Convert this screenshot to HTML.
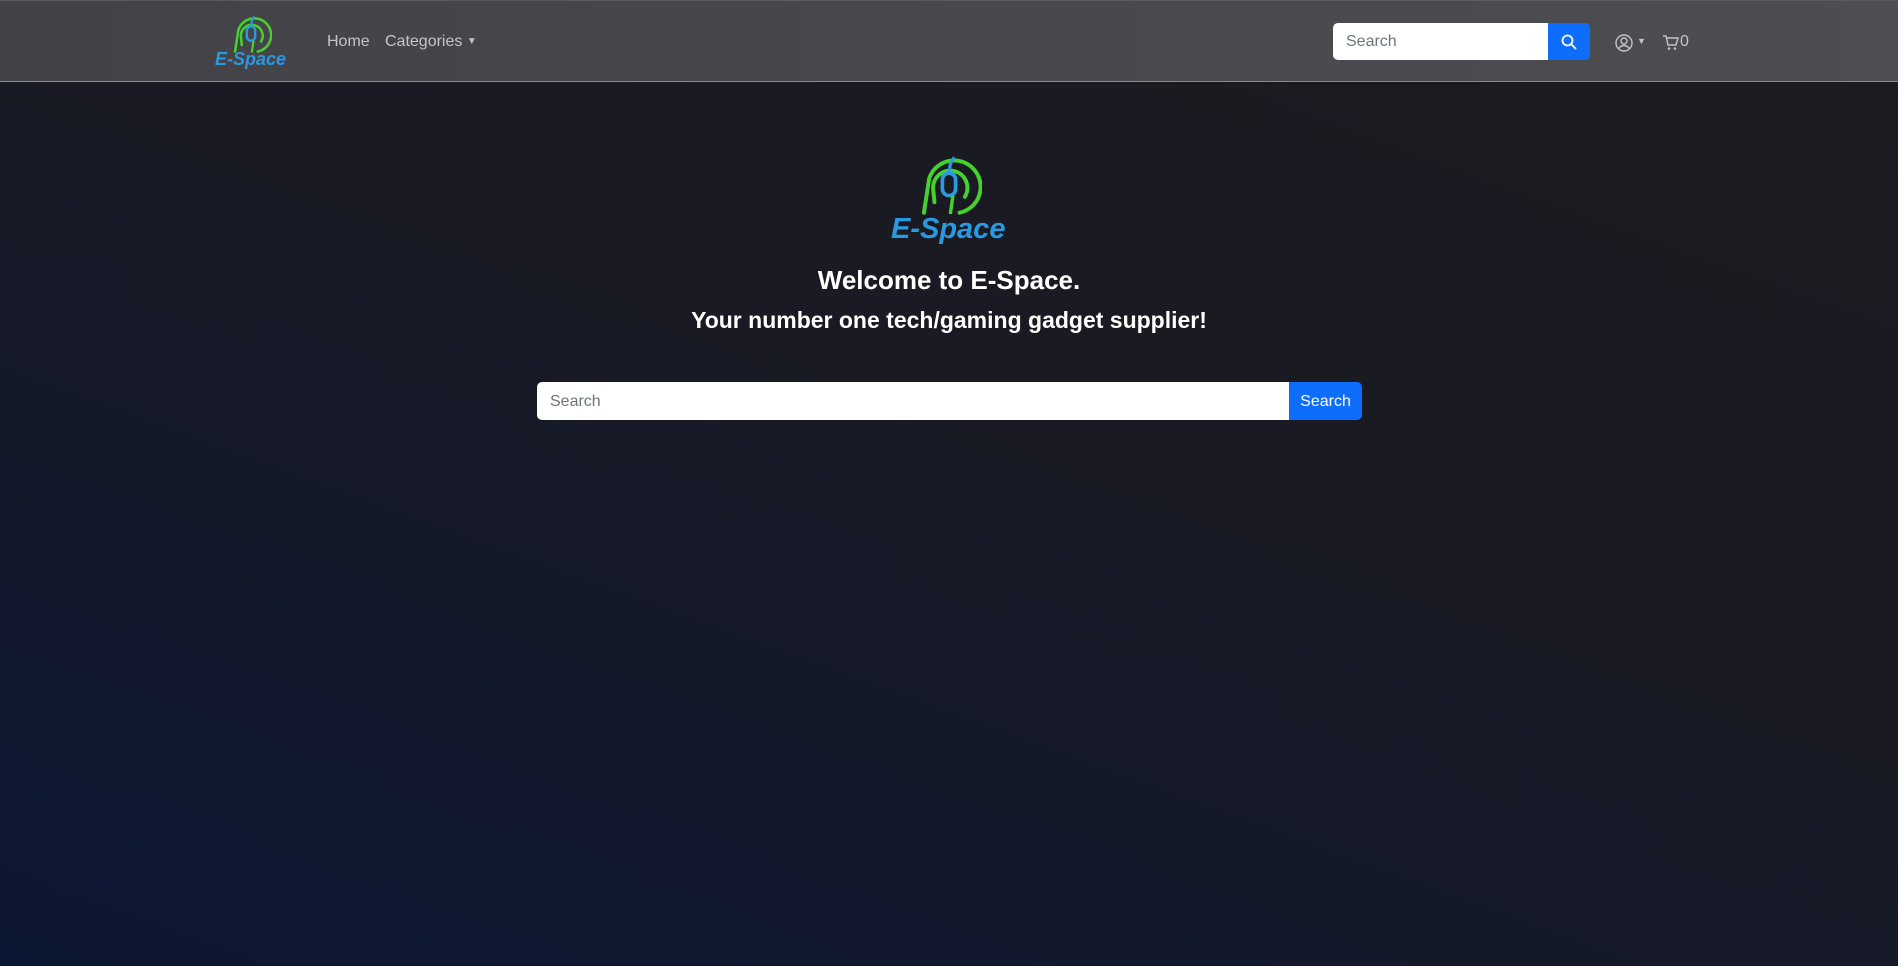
<!DOCTYPE html>
<html><head><style>
*{box-sizing:border-box;margin:0;padding:0}
body{width:1898px;height:966px;overflow:hidden;font-family:"Liberation Sans",sans-serif;background:linear-gradient(200deg,#1c1c20 0%,#191a24 45%,#0c1733 100%);position:relative}
.nav{position:absolute;top:0;left:0;width:1898px;height:82px;background:linear-gradient(90deg,#424248,#4d4d52);border-top:1px solid #5a5a5f;border-bottom:1px solid #8a8a8e}
.a{position:absolute;color:#c4c4c8;font-size:16px}
.logo-t{position:absolute;font-style:italic;font-weight:bold;color:#2a9ae0;font-family:"Liberation Sans",sans-serif}
.sin{position:absolute;left:1333px;top:22px;width:215px;height:37px;background:#fff;border-radius:5px 0 0 5px;color:#6c757d;font-size:16px;padding:10px 13px}
.sbt{position:absolute;left:1548px;top:22px;width:42px;height:37px;background:#0d6efd;border-radius:0 5px 5px 0}
h1{position:absolute;left:0;width:1898px;text-align:center;color:#fff;font-weight:bold}
.bin{position:absolute;left:537px;top:382px;width:752px;height:38px;background:#fff;border-radius:5px 0 0 5px;color:#6c757d;font-size:16px;padding:11px 13px}
.bbt{position:absolute;left:1289px;top:382px;width:73px;height:38px;background:#0d6efd;border-radius:0 5px 5px 0;color:#fff;font-size:16px;text-align:center;line-height:40px}
</style></head><body>
<svg width="0" height="0" style="position:absolute"><defs><g id="lg"><g fill="none" stroke="#44d22c" stroke-width="3" stroke-linecap="round"><path d="M6 46 L10 20 A20 20 0 1 1 33 46"/><path d="M14 38 L13 28 A13 13 0 1 1 37 34"/></g><rect x="20" y="16" width="10" height="17" rx="5" fill="none" stroke="#2a9ae0" stroke-width="2.8"/><path d="M25 16 L26 9 L29 4" fill="none" stroke="#2a9ae0" stroke-width="2.4"/><path d="M28 33 L26 47" stroke="#44d22c" stroke-width="2.6"/></g></defs></svg>
<div class="nav">
<svg style="position:absolute;left:230px;top:12px" width="42" height="42" viewBox="0 0 50 50"><use href="#lg"/></svg>
<div class="logo-t" style="left:215px;top:48px;font-size:18px">E-Space</div>
<div class="a" style="left:327px;top:32px">Home</div>
<div class="a" style="left:385px;top:32px">Categories <span style="font-size:10px;vertical-align:2px">▼</span></div>
<div class="sin">Search</div>
<div class="sbt"><svg style="position:absolute;left:13px;top:11px" width="16" height="16" viewBox="0 0 16 16"><circle cx="6.5" cy="6.5" r="5" fill="none" stroke="#fff" stroke-width="1.8"/><path d="M10.5 10.5 L15 15" stroke="#fff" stroke-width="1.8"/></svg></div>
<svg style="position:absolute;left:1615px;top:33px" width="18" height="18" viewBox="0 0 18 18"><circle cx="9" cy="9" r="8" fill="none" stroke="#c4c4c8" stroke-width="1.4"/><circle cx="9" cy="7" r="3" fill="none" stroke="#c4c4c8" stroke-width="1.4"/><path d="M4 14 Q9 9 14 14" fill="none" stroke="#c4c4c8" stroke-width="1.4"/></svg>
<div class="a" style="left:1637px;top:35px;font-size:9px">▼</div>
<svg style="position:absolute;left:1662px;top:33px" width="17" height="17" viewBox="0 0 17 17"><path d="M1 2h3l2 9h8l2-7H5" fill="none" stroke="#c4c4c8" stroke-width="1.4"/><circle cx="7" cy="14.5" r="1.3" fill="#c4c4c8"/><circle cx="13" cy="14.5" r="1.3" fill="#c4c4c8"/></svg>
<div class="a" style="left:1680px;top:32px">0</div>
</div>
<svg style="position:absolute;left:916px;top:152px" width="66" height="66" viewBox="0 0 50 50"><use href="#lg"/></svg>
<div class="logo-t" style="left:891px;top:213px;font-size:29px">E-Space</div>
<h1 style="top:265px;font-size:26px">Welcome to E-Space.</h1>
<h1 style="top:307px;font-size:23px">Your number one tech/gaming gadget supplier!</h1>
<div class="bin">Search</div>
<div class="bbt">Search</div>
</body></html>
